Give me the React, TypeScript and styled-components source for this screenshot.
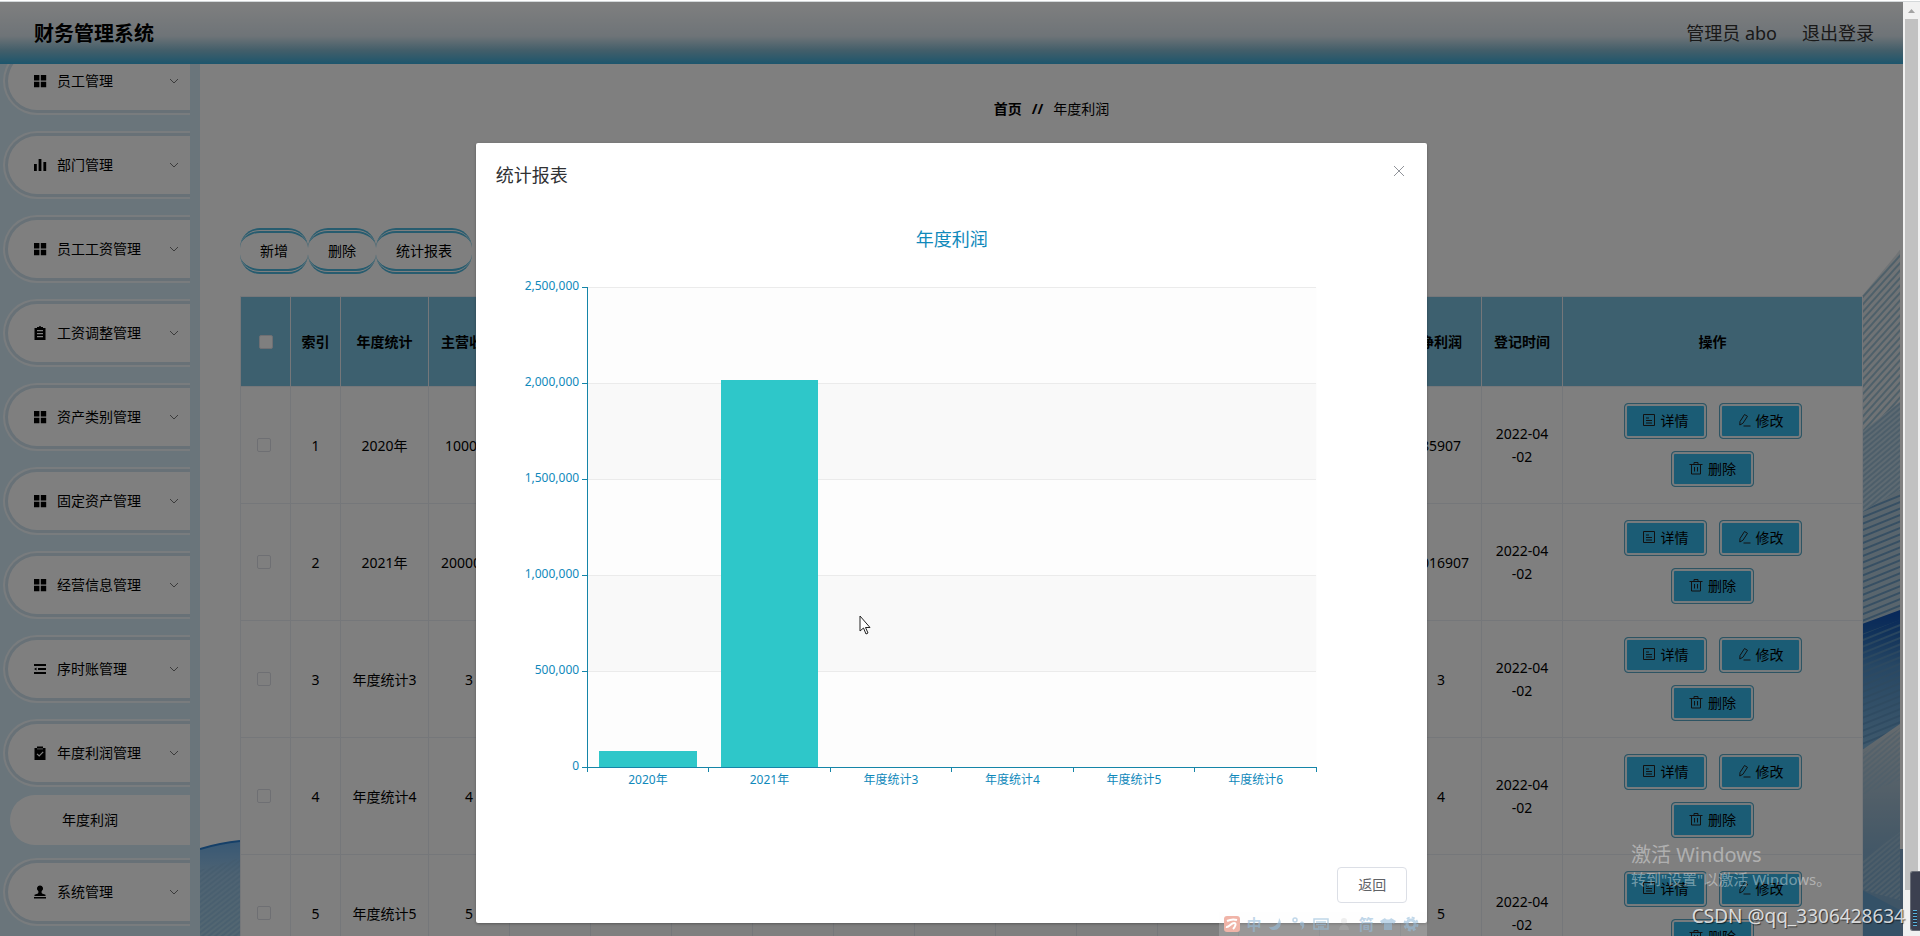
import React from "react";
import styled, { createGlobalStyle } from "styled-components";

const GlobalStyle = createGlobalStyle`
  *, *::before, *::after { box-sizing: border-box; }
  html, body, #root { height: 100%; }
  body {
    margin: 0;
    overflow: hidden;
    background: #fff;
    color: #000;
    font-family: "Noto Sans", "Noto Sans CJK SC", sans-serif;
    font-size: 14px;
    line-height: 23px;
  }
  button { font: inherit; color: inherit; cursor: pointer; }
  a { color: inherit; text-decoration: none; }
`;

/* ---------- frame ---------- */

const Frame = styled.div`
  display: flex;
  height: 100vh;
  padding-top: 2px;
  background: linear-gradient(#fff 1px, #d4d8da 1px, #d4d8da 2px, #fff 2px);
  position: relative;
  overflow: hidden;
`;

const Shell = styled.div`
  flex: 1;
  min-width: 0;
  display: flex;
  flex-direction: column;
  position: relative;
  overflow: hidden;
`;

const Body = styled.div`
  flex: 1;
  min-height: 0;
  display: flex;
`;

const Scrollbar = styled.div`
  width: 17px;
  display: flex;
  flex-direction: column;
  align-items: center;
  background: #f1f1f1;
`;

const ScrollArrow = styled.svg`
  width: 17px;
  height: 17px;
  flex: none;
`;

const ScrollThumb = styled.div`
  flex: 95;
  width: 13px;
  background: #c1c1c1;
`;

const ScrollRest = styled.div`
  flex: 5;
`;

/* ---------- header ---------- */

const Header = styled.header`
  flex: none;
  height: 62px;
  padding: 0 29px 0 34px;
  display: flex;
  align-items: center;
  justify-content: space-between;
  background: linear-gradient(#fff 0%, #dde8f0 55%, #86bdd4 78%, #3aacda 100%);
`;

const Brand = styled.h1`
  margin: 0;
  padding-top: 2px;
  font-size: 20px;
  line-height: 24px;
  font-weight: 700;
`;

const UserNav = styled.nav`
  display: flex;
  gap: 25px;
  font-size: 18px;
  line-height: 24px;
  color: #333;
`;

/* ---------- sidebar ---------- */

const Sidebar = styled.nav`
  flex: none;
  width: 200px;
  padding: 0 10px 10px 3px;
  background: #d4eaf6;
  overflow: hidden;
`;

const MenuList = styled.ul`
  list-style: none;
  margin: -17px 0 0;
  padding: 0;
  display: flex;
  flex-direction: column;
  gap: 16px;
`;

const MenuButton = styled.button`
  display: block;
  width: 100%;
  height: 68px;
  padding: 3px 0 3px 3px;
  border: 2px solid #f2f9fd;
  border-right: 0;
  border-radius: 34px 0 0 34px;
  background: #d0e3ee;
  text-align: left;
`;

const MenuFill = styled.span`
  display: flex;
  align-items: center;
  gap: 10px;
  height: 100%;
  padding: 0 11px 0 25px;
  border-radius: 29px 0 0 29px;
  background: #fff;
`;

const MenuLabel = styled.span`
  flex: 1;
  padding-bottom: 2px;
`;

const MenuIcon = styled.svg`
  width: 14px;
  height: 14px;
  fill: #000;
  flex: none;
`;

const Chevron = styled.svg`
  width: 10px;
  height: 10px;
  fill: none;
  stroke: #777;
  flex: none;
`;

const SubItem = styled.a`
  display: flex;
  align-items: center;
  height: 50px;
  margin: 8px 0 -3px 7px;
  padding: 0 0 2px 52px;
  border-radius: 25px 0 0 25px;
  background: #fff;
`;

/* ---------- content ---------- */

const Main = styled.main`
  flex: 1;
  min-width: 0;
  padding: 0 40px;
  position: relative;
  overflow: hidden;
  background: #fff;
`;

const Wave = styled.svg<{ $side: "left" | "right" }>`
  position: absolute;
  bottom: 0;
  ${(p) => p.$side}: 0;
`;

const Content = styled.div`
  position: relative;
`;

const Breadcrumb = styled.nav`
  display: flex;
  justify-content: center;
  gap: 10px;
  padding: 33px 0 108px;
`;

const Toolbar = styled.div`
  display: flex;
  margin-bottom: 22px;
`;

const ToolButton = styled.button`
  height: 46px;
  padding: 0 20px 2px;
  border: 0 double #4fb8de;
  border-width: 5px 0;
  border-radius: 20px;
  background: #fff;
`;

const Table = styled.table`
  width: 100%;
  table-layout: fixed;
  border-collapse: collapse;
  background: #fff;
  text-align: center;
  th, td { border: 1px solid #ebeef5; }
`;

const HeadCell = styled.th`
  height: 90px;
  padding: 0;
  background: #7ac0de;
  font-weight: 700;
  white-space: nowrap;
`;

const Cell = styled.td`
  height: 117px;
  padding: 0;
`;

const SelectCell = styled(Cell)`
  padding-right: 4px;
`;

const Check = styled.input`
  appearance: none;
  display: block;
  width: 14px;
  height: 14px;
  margin: 0 auto;
  border: 1px solid #dcdfe6;
  border-radius: 2px;
  background: #fff;
`;

const Actions = styled.div`
  display: flex;
  flex-wrap: wrap;
  justify-content: center;
  gap: 12px;
  padding: 0 40px;
`;

const ActionButton = styled.button`
  display: flex;
  align-items: center;
  justify-content: center;
  gap: 5px;
  width: 83px;
  height: 36px;
  padding: 0 0 2px;
  border: 1px solid #5aa8c6;
  border-radius: 4px;
  background: #36b8ea;
  box-shadow: inset 0 0 0 2px #eef6fa;
`;

const ActionIcon = styled.svg`
  width: 14px;
  height: 14px;
  fill: none;
  stroke: #222;
  flex: none;
`;

/* ---------- dialog ---------- */

const Overlay = styled.div`
  position: absolute;
  inset: 0;
  padding-top: 141px;
  background: rgba(0, 0, 0, 0.5);
`;

const Dialog = styled.section`
  width: 50%;
  margin: 0 auto;
  border-radius: 2px;
  background: #fff;
  box-shadow: 0 1px 3px rgba(0, 0, 0, 0.3);
`;

const DialogHeader = styled.header`
  display: flex;
  justify-content: space-between;
  padding: 20px 20px 10px;
`;

const DialogTitle = styled.h2`
  margin: 0;
  font-size: 18px;
  line-height: 24px;
  font-weight: 400;
  color: #303133;
`;

const CloseButton = styled.button`
  width: 16px;
  height: 16px;
  padding: 0;
  border: 0;
  background: none;
  svg { display: block; stroke: #909399; }
`;

const DialogBody = styled.div`
  padding: 30px 20px;
`;

const DialogFooter = styled.footer`
  display: flex;
  justify-content: flex-end;
  padding: 10px 20px 20px;
`;

const BackButton = styled.button`
  height: 36px;
  padding: 0 20px 2px;
  border: 1px solid #dcdfe6;
  border-radius: 4px;
  background: #fff;
  color: #606266;
`;

const Chart = styled.svg`
  display: block;
  width: 100%;
  height: 600px;
  overflow: visible;
`;

const ChartTitle = styled.text`
  fill: #1089bb;
  font-size: 18px;
`;

const ChartLabel = styled.text`
  fill: #1089bb;
  font-size: 12px;
`;

/* ---------- floating layers ---------- */

const Activation = styled.div`
  position: absolute;
  right: 95px;
  bottom: 46px;
  width: 194px;
  color: rgba(255, 255, 255, 0.4);
  white-space: nowrap;
  font-size: 15px;
  line-height: 22px;
`;

const ActivationTitle = styled.div`
  font-size: 20px;
  line-height: 26px;
`;

const Signature = styled.div`
  position: absolute;
  right: 15px;
  bottom: 6px;
  font-size: 19px;
  line-height: 28px;
  color: rgba(255, 255, 255, 0.8);
  text-shadow: 1px 1px 1px rgba(0, 0, 0, 0.6);
  white-space: nowrap;
`;

const ImeBar = styled.div`
  position: absolute;
  right: 493px;
  bottom: 0;
  width: 208px;
  height: 24px;
  padding: 0 8px 0 5px;
  display: flex;
  align-items: center;
  justify-content: space-between;
  background: rgba(250, 250, 250, 0.2);
  color: rgba(150, 188, 218, 0.6);
  font-size: 15px;
  line-height: 24px;
  font-weight: 700;
  svg { width: 16px; height: 16px; }
`;

const ImeLogo = styled.svg`
  border-radius: 3px;
  background: #f0b4a8;
`;

const Cursor = styled.svg`
  position: absolute;
  left: 859px;
  top: 615px;
`;

const Meter = styled.div`
  position: absolute;
  right: 0;
  bottom: 5px;
  width: 10px;
  height: 60px;
  padding: 4px 2px;
  border-radius: 3px 0 0 3px;
  border: 1px solid #6a6e78;
  border-right: 0;
  background: #3c4050;
  display: flex;
  align-items: flex-end;
`;

const MeterLevel = styled.div`
  width: 4px;
  height: 16px;
  background: repeating-linear-gradient(#59b3dd 0 1px, #2a3140 1px 3px);
`;

/* ---------- data ---------- */

type IconName = "grid" | "bars" | "list" | "lines" | "claim" | "stamp";

const menu: { label: string; icon: IconName; child?: string }[] = [
  { label: "员工管理", icon: "grid" },
  { label: "部门管理", icon: "bars" },
  { label: "员工工资管理", icon: "grid" },
  { label: "工资调整管理", icon: "list" },
  { label: "资产类别管理", icon: "grid" },
  { label: "固定资产管理", icon: "grid" },
  { label: "经营信息管理", icon: "grid" },
  { label: "序时账管理", icon: "lines" },
  { label: "年度利润管理", icon: "claim", child: "年度利润" },
  { label: "系统管理", icon: "stamp" },
];

const rows = [
  { id: 1, year: "2020年", income: "100000", profit: "85907" },
  { id: 2, year: "2021年", income: "2000000", profit: "2016907" },
  { id: 3, year: "年度统计3", income: "3", profit: "3" },
  { id: 4, year: "年度统计4", income: "4", profit: "4" },
  { id: 5, year: "年度统计5", income: "5", profit: "5" },
];

const middleColumns = Array.from({ length: 11 }, (_, i) => i);

const bars = [
  { label: "2020年", value: 85907 },
  { label: "2021年", value: 2016907 },
  { label: "年度统计3", value: 3 },
  { label: "年度统计4", value: 4 },
  { label: "年度统计5", value: 5 },
  { label: "年度统计6", value: 6 },
];

const iconPaths: Record<IconName, React.ReactNode> = {
  grid: <path d="M1 1h5.400v5.400H1zM7.800 1h5.400v5.400H7.800zM1 7.800h5.400v5.400H1zM7.800 7.800h5.400v5.400H7.800z" />,
  bars: <path d="M1 6h2.800v7H1zM5.600 1h2.800v12H5.600zM10.400 4h2.800v9h-2.800z" />,
  list: (
    <>
      <path d="M1.500 2H4V1h2L6.500 0h1L8 1h2v1h2.500v12h-11z" />
      <path d="M4 4.600h6M4 7.600h6M4 10.600h6" stroke="#fff" strokeWidth="1.100" />
    </>
  ),
  lines: <path d="M1 2h12v2H1zM5 6.100h8v1.800H5zM1 10h12v2H1zM1 7l2.500-1.600v3.200z" />,
  claim: (
    <>
      <path d="M1.500 2H4V.5h6V2h2.500v12h-11z" />
      <path d="M4 7.800l2.200 2.200 4-4.200" stroke="#fff" strokeWidth="1.200" fill="none" />
      <path d="M4 2.900h6" stroke="#fff" strokeWidth=".7" />
    </>
  ),
  stamp: <path d="M7 .5a3 3 0 0 1 2 5.300c-.6.6-.6 1.700 0 2.700l3.500 1.200v1.300h-11V9.700L5 8.500c.6-1 .6-2.100 0-2.700A3 3 0 0 1 7 .5zM1 12h12v1.400H1z" />,
};

const actionPaths = {
  详情: <path d="M1.500 1.500h11v11h-11zM4 5h3M4 7.500h6M4 10h6" />,
  修改: <path d="M3 8.500l4.500-7 3 1.800-4.600 7-3.100 1.700zM6.500 13h7" />,
  删除: <path d="M.5 3.500h13M2.500 3.500v9.500h9V3.500M5 3.500v-2h4v2M5.500 6v4.500M8.500 6v4.500" />,
};

/* ---------- parts ---------- */

const TOP = 60;
const PLOT = 480;
const MAX = 2500000;
const BAND = 80 / 6;
const AXIS = "#1585a8";

function ProfitChart() {
  const ticks = [0, 500000, 1000000, 1500000, 2000000, 2500000];
  const y = (v: number) => TOP + PLOT - Math.round((v / MAX) * PLOT);
  return (
    <Chart role="img" aria-label="年度利润">
      <ChartTitle x="50%" y="19" textAnchor="middle">年度利润</ChartTitle>
      {ticks.slice(1).map((t, i) => (
        <rect key={t} x="10%" width="80%" y={y(t)} height={96} fill={i % 2 ? "#f9f9f9" : "#fdfdfd"} />
      ))}
      <g shapeRendering="crispEdges">
        {ticks.slice(1).map((t) => (
          <line key={t} x1="10%" x2="90%" y1={y(t)} y2={y(t)} stroke="#ebebeb" />
        ))}
        {bars.map((b, i) => (
          <rect
            key={b.label}
            x={`${10 + BAND * (i + 0.1)}%`}
            width={`${BAND * 0.8}%`}
            y={y(b.value)}
            height={TOP + PLOT - y(b.value)}
            fill="#2ec7c9"
          />
        ))}
        <line x1="10%" x2="10%" y1={TOP} y2={TOP + PLOT} stroke={AXIS} />
        <line x1="10%" x2="90%" y1={TOP + PLOT} y2={TOP + PLOT} stroke={AXIS} />
        {ticks.map((t) => (
          <svg key={t} x="10%" y={y(t)} overflow="visible">
            <line x1="-5" x2="0" stroke={AXIS} />
          </svg>
        ))}
        {[0, 1, 2, 3, 4, 5, 6].map((i) => (
          <line key={i} x1={`${10 + BAND * i}%`} x2={`${10 + BAND * i}%`} y1={TOP + PLOT} y2={TOP + PLOT + 5} stroke={AXIS} />
        ))}
      </g>
      {ticks.map((t) => (
        <ChartLabel key={t} x="10%" dx="-8" y={y(t) + 3} textAnchor="end">{t.toLocaleString("en-US")}</ChartLabel>
      ))}
      {bars.map((b, i) => (
        <ChartLabel key={b.label} x={`${10 + BAND * (i + 0.5)}%`} y={TOP + PLOT + 17} textAnchor="middle">{b.label}</ChartLabel>
      ))}
    </Chart>
  );
}

function LeftWave() {
  return (
    <Wave $side="left" width="40" height="96" aria-hidden="true">
      <defs>
        <linearGradient id="leftFill" x1="0" y1="0" x2="0" y2="1">
          <stop offset="0" stopColor="#6fb0ea" />
          <stop offset="0.35" stopColor="#9cc6e6" />
          <stop offset="1" stopColor="#a8cfe4" />
        </linearGradient>
        <pattern id="leftLines" width="40" height="4" patternUnits="userSpaceOnUse" patternTransform="rotate(-38)">
          <path d="M0 1h40" stroke="#85b4d8" strokeWidth="1" />
        </pattern>
      </defs>
      <path d="M0 9Q20 3 40 1V96H0z" fill="url(#leftFill)" />
      <path d="M0 30L40 18V96H0z" fill="url(#leftLines)" />
      <path d="M0 9Q20 3 40 1" fill="none" stroke="#2a7fd0" strokeWidth="2" />
    </Wave>
  );
}

function RightWave() {
  return (
    <Wave $side="right" width="41" height="686" aria-hidden="true">
      <defs>
        <pattern id="steep" width="40" height="5" patternUnits="userSpaceOnUse" patternTransform="rotate(-48)">
          <path d="M0 2h40" stroke="#9dc0d4" strokeWidth="2" />
        </pattern>
        <pattern id="fine" width="40" height="4" patternUnits="userSpaceOnUse" patternTransform="rotate(-40)">
          <path d="M0 2h40" stroke="#9bbdd4" strokeWidth="2" />
        </pattern>
        <pattern id="flat" width="40" height="6" patternUnits="userSpaceOnUse" patternTransform="rotate(-22)">
          <path d="M0 2h40" stroke="#5c93c0" strokeWidth="2" strokeOpacity="0.8" />
        </pattern>
        <linearGradient id="deep" x1="0" y1="0" x2="0" y2="1">
          <stop offset="0" stopColor="#0f4fb4" />
          <stop offset="0.15" stopColor="#1f62b4" />
          <stop offset="0.4" stopColor="#4f8fc8" />
          <stop offset="1" stopColor="#7eb2d8" />
        </linearGradient>
        <linearGradient id="base" x1="0" y1="0" x2="0" y2="1">
          <stop offset="0" stopColor="#ccd6dc" />
          <stop offset="0.4" stopColor="#9cbad0" />
          <stop offset="0.6" stopColor="#86afce" />
          <stop offset="1" stopColor="#7aa8cc" />
        </linearGradient>
      </defs>
      <path d="M0 46L38 0V270H0z" fill="#e0e6ea" />
      <path d="M0 46L38 0V152L0 182z" fill="url(#steep)" />
      <path d="M0 182L38 152V270H0z" fill="#bcd5e4" />
      <path d="M0 182L38 152V240L0 262z" fill="url(#fine)" />
      <path d="M0 262L38 240V380H0z" fill="#b2cbdb" />
      <path d="M0 262L38 240V380H0z" fill="url(#flat)" />
      <path d="M0 374L38 360V500H0z" fill="url(#deep)" />
      <path d="M0 384L38 370V500H0z" fill="url(#flat)" />
      <path d="M0 500L38 474V686H0z" fill="url(#base)" />
      <path d="M0 504L38 478V530L0 545z" fill="url(#fine)" fillOpacity="0.6" />
      <path d="M0 610L38 582V650L0 640z" fill="url(#fine)" />
      <path d="M0 640L38 660V686H0z" fill="#68a2cf" />
      <path d="M38 599h3v87h-3z" fill="#7fa5c8" />
    </Wave>
  );
}

export default function App() {
  return (
    <>
      <GlobalStyle />
      <Frame>
        <Shell>
          <Header>
            <Brand>财务管理系统</Brand>
            <UserNav>
              <span>管理员 abo</span>
              <a href="#logout">退出登录</a>
            </UserNav>
          </Header>
          <Body>
            <Sidebar>
              <MenuList>
                {menu.map((m) => (
                  <li key={m.label}>
                    <MenuButton type="button">
                      <MenuFill>
                        <MenuIcon viewBox="0 0 14 14">{iconPaths[m.icon]}</MenuIcon>
                        <MenuLabel>{m.label}</MenuLabel>
                        <Chevron viewBox="0 0 10 10"><path d="M1 3l4 4 4-4" /></Chevron>
                      </MenuFill>
                    </MenuButton>
                    {m.child && <SubItem href="#profit">{m.child}</SubItem>}
                  </li>
                ))}
              </MenuList>
            </Sidebar>
            <Main>
              <LeftWave />
              <RightWave />
              <Content>
                <Breadcrumb>
                  <b>首页</b>
                  <b>//</b>
                  <span>年度利润</span>
                </Breadcrumb>
                <Toolbar>
                  <ToolButton type="button">新增</ToolButton>
                  <ToolButton type="button">删除</ToolButton>
                  <ToolButton type="button">统计报表</ToolButton>
                </Toolbar>
                <Table>
                  <colgroup>
                    <col style={{ width: 50 }} />
                    <col style={{ width: 50 }} />
                    <col style={{ width: 88 }} />
                    <col />
                    {middleColumns.map((c) => <col key={c} />)}
                    <col />
                    <col />
                    <col style={{ width: 300 }} />
                  </colgroup>
                  <thead>
                    <tr>
                      <HeadCell><Check type="checkbox" aria-label="全选" /></HeadCell>
                      <HeadCell>索引</HeadCell>
                      <HeadCell>年度统计</HeadCell>
                      <HeadCell>主营收入</HeadCell>
                      {middleColumns.map((c) => <HeadCell key={c} />)}
                      <HeadCell>净利润</HeadCell>
                      <HeadCell>登记时间</HeadCell>
                      <HeadCell>操作</HeadCell>
                    </tr>
                  </thead>
                  <tbody>
                    {rows.map((r) => (
                      <tr key={r.id}>
                        <SelectCell><Check type="checkbox" aria-label={r.year} /></SelectCell>
                        <Cell>{r.id}</Cell>
                        <Cell>{r.year}</Cell>
                        <Cell>{r.income}</Cell>
                        {middleColumns.map((c) => <Cell key={c} />)}
                        <Cell>{r.profit}</Cell>
                        <Cell>2022-04<br />-02</Cell>
                        <Cell>
                          <Actions>
                            {(["详情", "修改", "删除"] as const).map((a) => (
                              <ActionButton key={a} type="button">
                                <ActionIcon viewBox="0 0 14 14">{actionPaths[a]}</ActionIcon>
                                {a}
                              </ActionButton>
                            ))}
                          </Actions>
                        </Cell>
                      </tr>
                    ))}
                  </tbody>
                </Table>
              </Content>
            </Main>
          </Body>
          <Overlay>
            <Dialog role="dialog" aria-label="统计报表">
              <DialogHeader>
                <DialogTitle>统计报表</DialogTitle>
                <CloseButton type="button" aria-label="关闭">
                  <svg width="16" height="16" viewBox="0 0 16 16"><path d="M3 3l10 10M13 3L3 13" /></svg>
                </CloseButton>
              </DialogHeader>
              <DialogBody>
                <ProfitChart />
              </DialogBody>
              <DialogFooter>
                <BackButton type="button">返回</BackButton>
              </DialogFooter>
            </Dialog>
          </Overlay>
        </Shell>
        <Scrollbar>
          <ScrollArrow viewBox="0 0 17 17"><path d="M5 11l3.500-4 3.500 4z" fill="#a3a3a3" /></ScrollArrow>
          <ScrollThumb />
          <ScrollRest />
        </Scrollbar>
        <Activation>
          <ActivationTitle>激活 Windows</ActivationTitle>
          转到"设置"以激活 Windows。
        </Activation>
        <Meter><MeterLevel /></Meter>
        <Signature>CSDN @qq_3306428634</Signature>
        <ImeBar>
          <ImeLogo viewBox="0 0 16 16"><path d="M3 5c4-2 7-2 10-1M2 11c3 1 5-4 8-4s1 4-1 6" stroke="#fff" strokeWidth="2" fill="none" /></ImeLogo>
          <span>中</span>
          <svg viewBox="0 0 16 16" fill="currentColor"><path d="M11 2c4 5 1 12-5 12-2 0-4-1-5-3 5 1 10-3 10-9z" /></svg>
          <svg viewBox="0 0 16 16" fill="currentColor"><circle cx="4" cy="4" r="2" fill="none" stroke="currentColor" strokeWidth="1.500" /><path d="M9 8a2 2 0 0 1 4-1c1 4-1 6-3 7 1-2 1-3 1-4-1 0-2-1-2-2z" /></svg>
          <svg viewBox="0 0 16 16" fill="none" stroke="currentColor" strokeWidth="1.500"><path d="M1 3h14v10H1zM3 6h10M3 8.500h10M5 11h6" /></svg>
          <svg viewBox="0 0 16 16" fill="rgba(190,190,190,.25)"><circle cx="8" cy="5" r="3" /><path d="M3 14c0-7 10-7 10 0z" /></svg>
          <span>简</span>
          <svg viewBox="0 0 16 16" fill="currentColor"><path d="M5 2c1 2 5 2 6 0l5 3-2 3-2-1v7H4V7L2 8 0 5z" /></svg>
          <svg viewBox="0 0 16 16" fill="none" stroke="currentColor"><circle cx="8" cy="8" r="4" strokeWidth="3" /><circle cx="8" cy="8" r="6.500" strokeWidth="2" strokeDasharray="3 2.100" /></svg>
        </ImeBar>
        <Cursor width="13" height="20" viewBox="0 0 13 20"><path d="M1 1v15l3.500-3 2.500 6 2-1-2.500-5.500H11z" fill="#fff" stroke="#222" /></Cursor>
      </Frame>
    </>
  );
}
